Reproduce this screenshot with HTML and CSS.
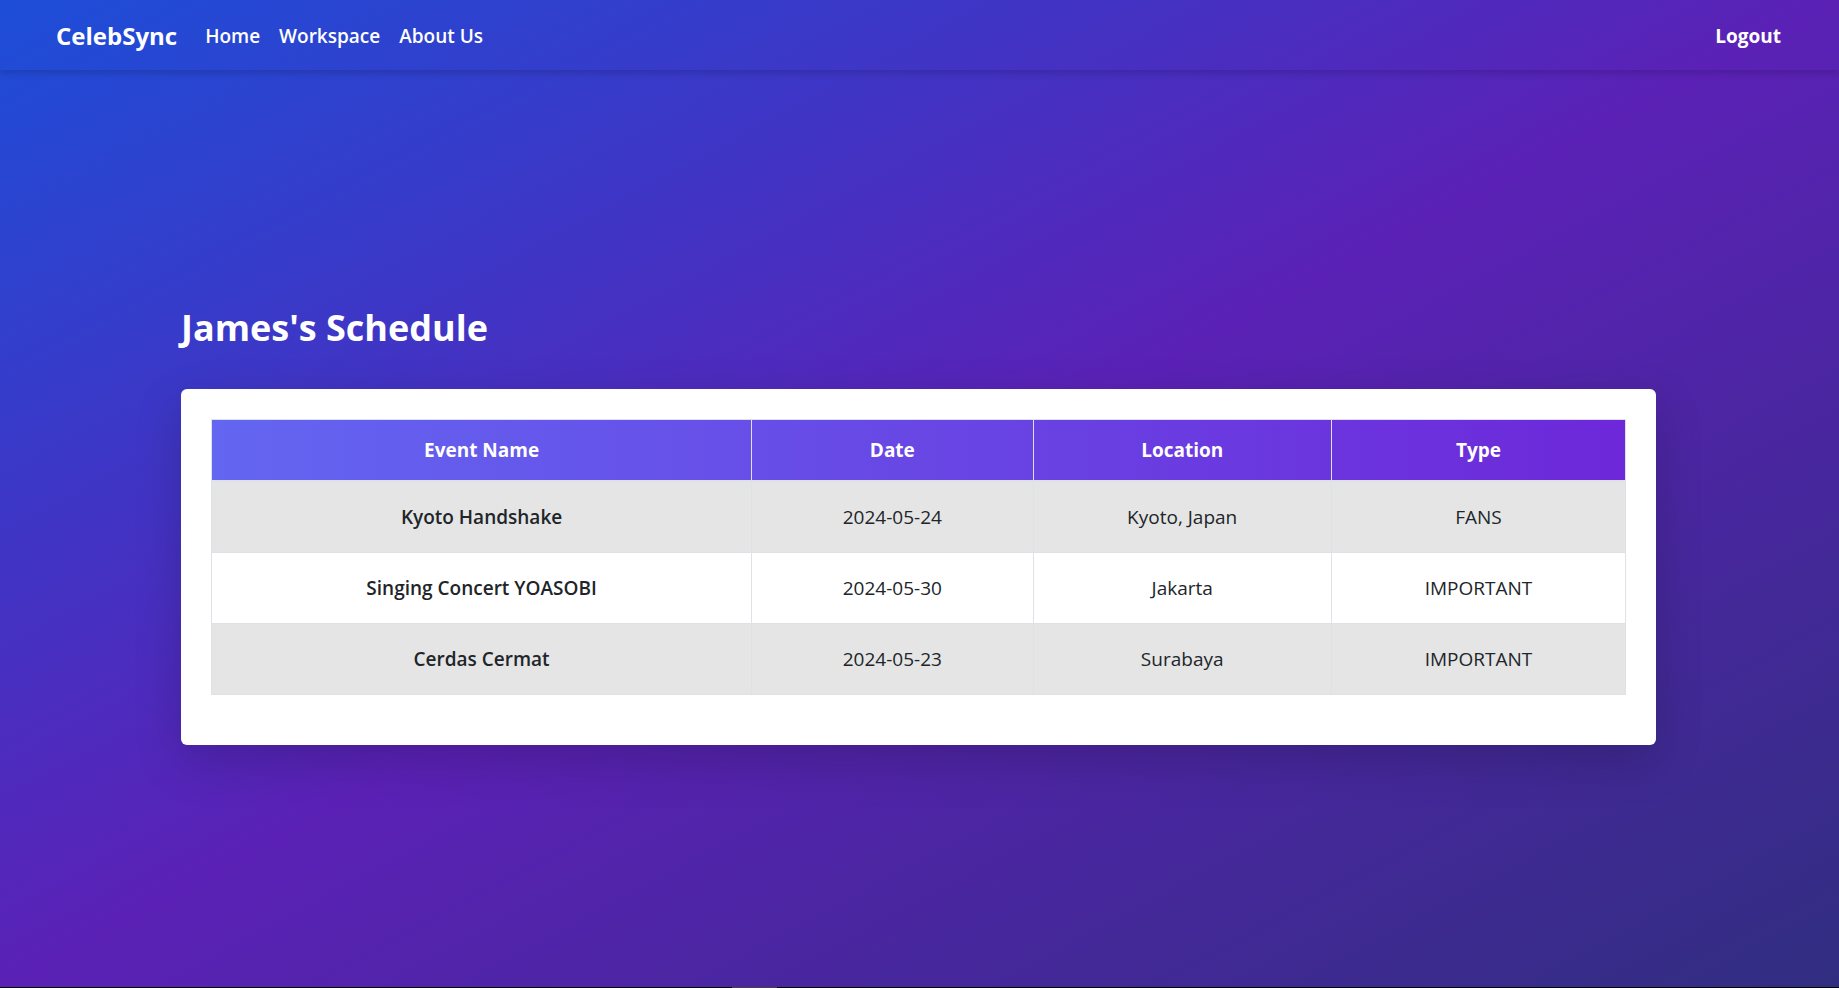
FILE: index.html
```html
<!DOCTYPE html>
<html lang="en">
<head>
<meta charset="utf-8">
<meta name="viewport" content="width=device-width, initial-scale=1">
<title>CelebSync</title>
<link rel="stylesheet" href="styles.css">
</head>
<body>
<div class="page">
  <header class="navbar">
    <a class="brand" href="#">CelebSync</a>
    <nav class="nav-links">
      <a href="#">Home</a>
      <a href="#">Workspace</a>
      <a href="#">About Us</a>
    </nav>
    <a class="logout" href="#">Logout</a>
  </header>
  <main class="content">
    <h1 class="title">James's Schedule</h1>
    <section class="card">
      <table class="schedule">
        <colgroup>
          <col class="col-name"><col class="col-date"><col class="col-location"><col class="col-type">
        </colgroup>
        <thead>
          <tr><th scope="col">Event Name</th><th scope="col">Date</th><th scope="col">Location</th><th scope="col">Type</th></tr>
        </thead>
        <tbody>
          <tr><th scope="row">Kyoto Handshake</th><td>2024-05-24</td><td>Kyoto, Japan</td><td>FANS</td></tr>
          <tr><th scope="row">Singing Concert YOASOBI</th><td>2024-05-30</td><td>Jakarta</td><td>IMPORTANT</td></tr>
          <tr><th scope="row">Cerdas Cermat</th><td>2024-05-23</td><td>Surabaya</td><td>IMPORTANT</td></tr>
        </tbody>
      </table>
    </section>
  </main>
</div>
<div class="edge"><span class="edge-tab"></span></div>
</body>
</html>
```
FILE: styles.css
```css
* {
  box-sizing: border-box;
}

body {
  margin: 0;
  min-height: 100vh;
  display: flex;
  flex-direction: column;
  font-family: "Segoe UI", "Open Sans", "Noto Sans", sans-serif;
  font-size: 19px;
  line-height: 30px;
  color: #212529;
}

.page {
  flex: 1;
  display: flex;
  flex-direction: column;
  background: linear-gradient(to bottom right, #1d4ed8, #5b21b6, #312e81);
}

.navbar {
  display: flex;
  align-items: center;
  padding: 21px 58px 19px 56px;
  font-weight: 600;
  box-shadow: 0 4px 6px rgba(0, 0, 0, 0.14);
}

.navbar a {
  color: #fff;
  text-decoration: none;
}

.navbar .brand {
  font-size: 24px;
  font-weight: 700;
  margin-right: 28px;
}

.nav-links {
  display: flex;
  gap: 19px;
}

.navbar .logout {
  margin-left: auto;
  font-weight: 700;
}

.content {
  flex: 1;
  display: flex;
  flex-direction: column;
  justify-content: center;
  gap: 42px;
  width: 100%;
  max-width: 1537px;
  margin: 0 auto;
  padding: 0 32px 3px 30px;
}

.title {
  margin: 0;
  font-size: 36px;
  line-height: 38px;
  font-weight: 700;
  color: #fff;
}

.card {
  padding: 30px 30px 50px;
  background: #fff;
  border-radius: 6px;
  box-shadow: 0 16px 48px rgba(0, 0, 0, 0.18);
}

.schedule {
  width: 100%;
  table-layout: fixed;
  border-collapse: collapse;
  text-align: center;
}

.col-name { width: 38.2%; }
.col-date { width: 19.9%; }
.col-location { width: 21.1%; }
.col-type { width: 20.8%; }

.schedule th,
.schedule td {
  border: 1px solid #dee2e6;
  padding: 20px;
}

.schedule thead {
  background: linear-gradient(to right, #6366f1, #6d28d9);
  color: #fff;
}

.schedule thead th {
  padding: 15px 20px;
  border-bottom-width: 2px;
  font-weight: 700;
}

.schedule tbody th {
  font-weight: 600;
}

.schedule tbody tr:nth-child(odd) {
  background: #e5e5e5;
}

.edge {
  display: flex;
  height: 1px;
  padding-left: 39.8%;
  background: #000;
}

.edge-tab {
  width: 45px;
  background: #444;
}
```
